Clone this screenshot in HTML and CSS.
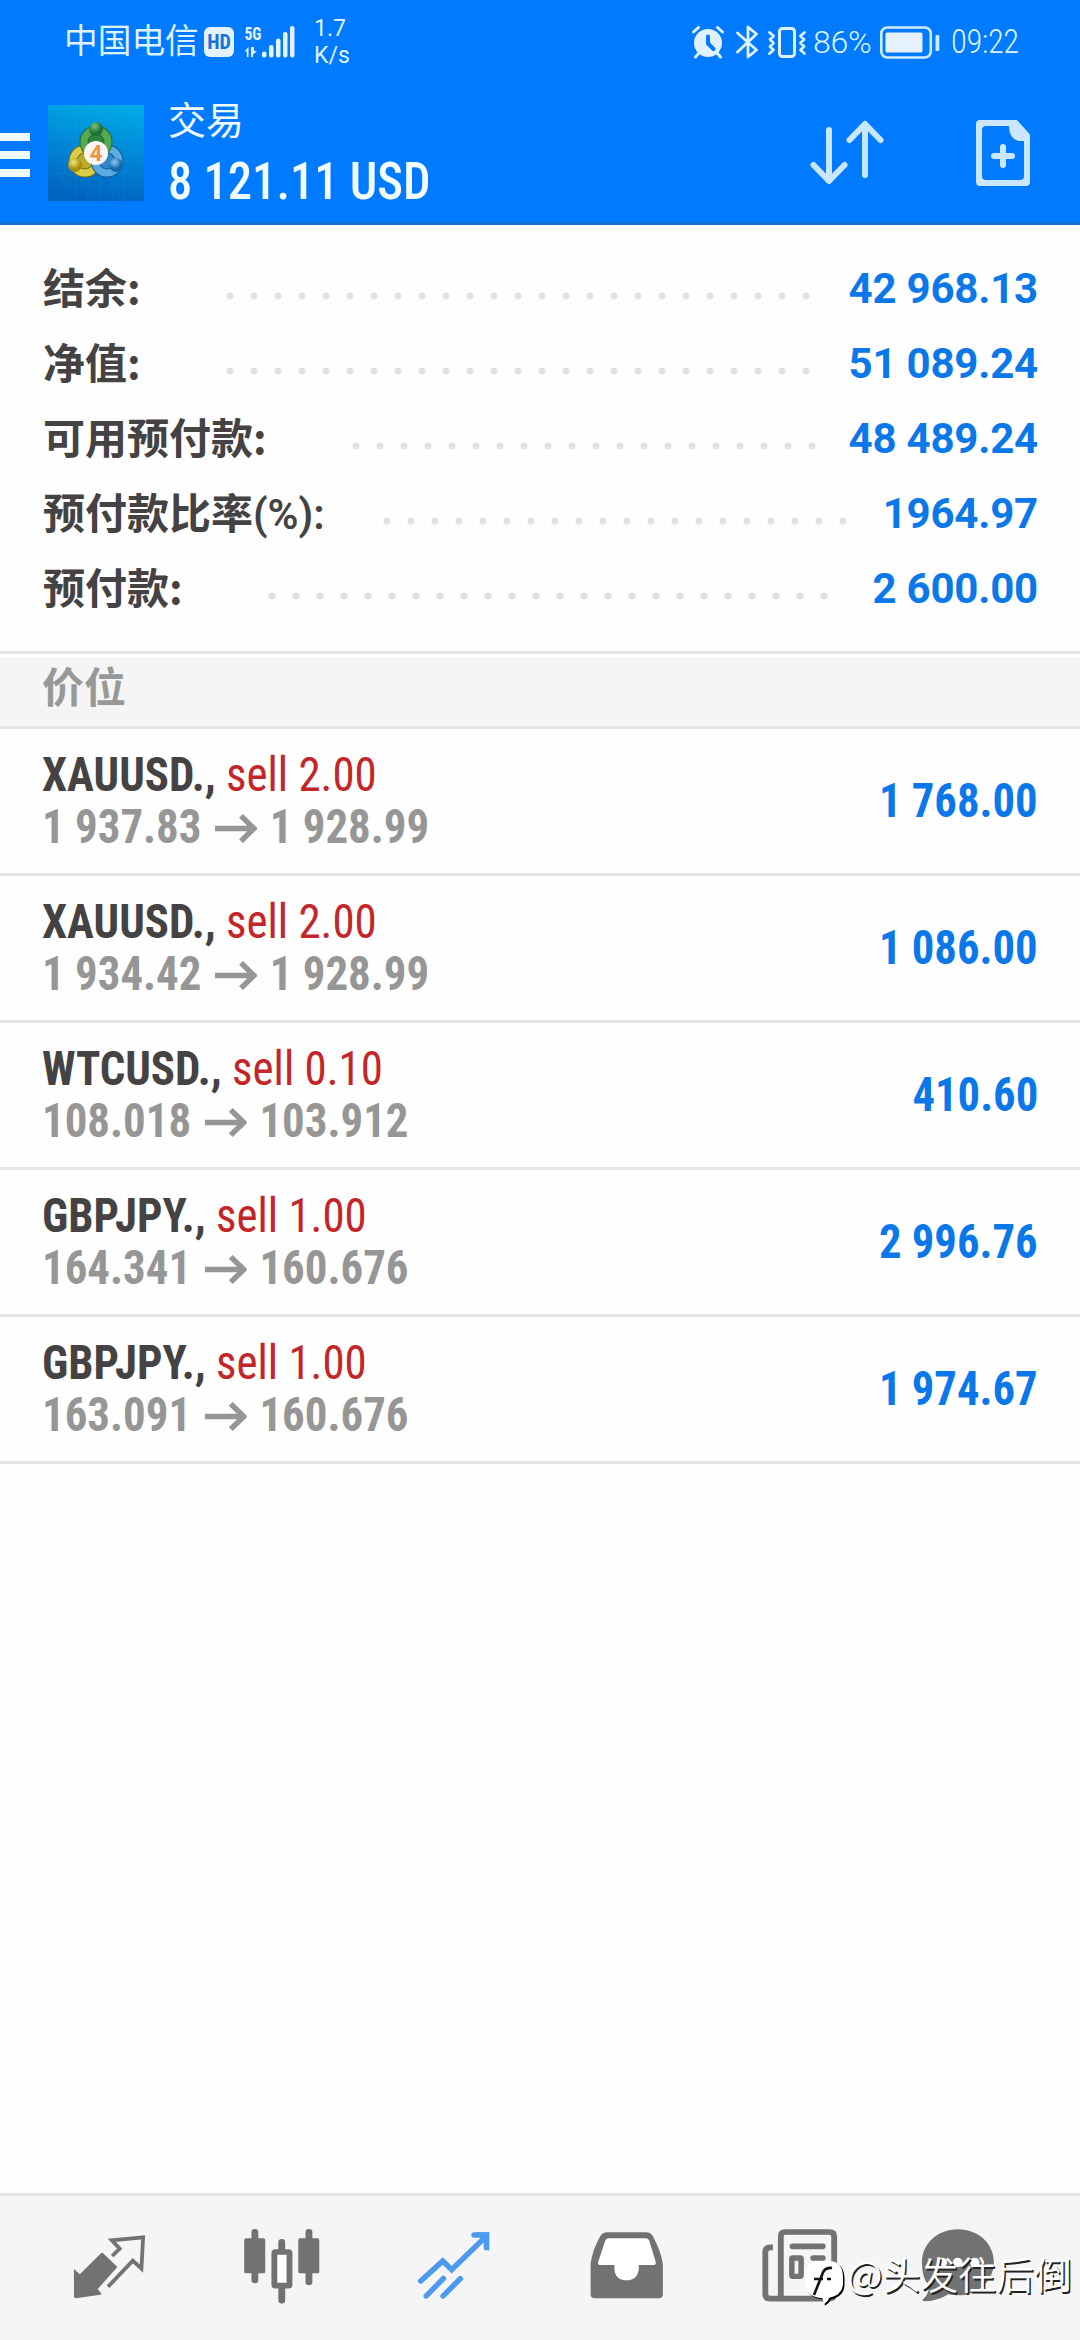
FILE: index.html
```html
<!DOCTYPE html>
<html lang="zh-CN">
<head>
<meta charset="utf-8">
<title>交易</title>
<link rel="stylesheet" href="styles.css">
</head>
<body>
<div class="screen">
  <header class="header">
    <div class="status">
      <span class="carrier">中国电信</span>
      <span class="hd">HD</span>
      <svg class="signal" width="54" height="38" viewBox="242 21 54 38" fill="#e4f3ff">
        <text class="net" x="244.500" y="38" textLength="17" lengthAdjust="spacingAndGlyphs">5G</text>
        <path d="M248.500 55V45l-4 4.500h2.300V55zM251 45v10h2v-2.500l4-3.500h-3v-4z"/>
        <rect x="262" y="49.500" width="4.500" height="6" rx="2"/><rect x="269" y="43" width="4.500" height="12.500" rx="2"/><rect x="276" y="36.500" width="4.500" height="19" rx="2"/><rect x="283" y="30" width="4.500" height="25.500" rx="2"/><rect x="290" y="24" width="4.500" height="31.500" rx="2"/>
      </svg>
      <span class="speed">1.7<br>K/s</span>
      <svg class="indicators" width="116" height="38" viewBox="691 21 116 38" fill="none" stroke="#e0f1ff" stroke-linecap="round" stroke-linejoin="round">
        <circle cx="708" cy="41" r="14" fill="#e0f1ff" stroke="none"/>
        <path d="M693.500 30l5-4.500M717.500 25.500l5 4.500M699 51l-3.500 4M717 51l3.500 4" stroke-width="3"/>
        <path d="M708 34.500v7l5.500 5.500" stroke="#007aff" stroke-width="4"/>
        <path d="M737.500 31l19 17-8.500 7V25l8.500 7-19 18" stroke-width="2.800"/>
        <rect x="779.500" y="26.500" width="15" height="28" rx="3" stroke-width="3"/>
        <path d="M769.500 30.500l4 3.500-3.500 3.500 3.500 3.500-3.500 3.500 3.500 3.500-4 3.500M804.500 30.500l-4 3.500 3.500 3.500-3.500 3.500 3.500 3.500-3.500 3.500 4 3.500" stroke-width="2.800"/>
      </svg>
      <span class="percent">86%</span>
      <svg class="battery" width="60" height="34" viewBox="880 23 60 34" fill="none">
        <rect x="881.300" y="25.500" width="49.500" height="30" rx="6" stroke="#d0eaff" stroke-width="2.600"/>
        <rect x="885.500" y="30.500" width="37" height="20" rx="1.500" fill="#e6f1ff"/>
        <rect x="935.500" y="33" width="3.800" height="16" rx="1" fill="#d0eaff"/>
      </svg>
      <span class="clock">09:22</span>
    </div>
    <div class="bar">
      <div class="burger"><i></i><i></i><i></i></div>
      <svg class="logo" width="96" height="96" viewBox="0 0 96 96">
        <defs>
          <linearGradient id="sky" x1=".6" y1="0" x2=".4" y2="1"><stop offset="0" stop-color="#00a8e8"/><stop offset=".5" stop-color="#0084d4"/><stop offset="1" stop-color="#0062be"/></linearGradient>
          <radialGradient id="green" cx=".4" cy=".3"><stop offset="0" stop-color="#7fc47c"/><stop offset="1" stop-color="#1d7238"/></radialGradient>
          <radialGradient id="gold" cx=".4" cy=".3"><stop offset="0" stop-color="#f4e878"/><stop offset="1" stop-color="#a98d12"/></radialGradient>
          <radialGradient id="blue" cx=".4" cy=".3"><stop offset="0" stop-color="#8ccdf4"/><stop offset="1" stop-color="#1267ae"/></radialGradient>
        </defs>
        <rect width="96" height="96" fill="url(#sky)"/>
        <path d="M16 0v96M28 0v96M40 0v96M52 0v96M64 0v96M76 0v96M0 20h96M0 32h96M0 44h96M0 56h96M0 68h96M0 80h96" stroke="#38c0e8" stroke-opacity=".12"/>
        <circle cx="37" cy="56" r="12" fill="#b8ab2c" stroke="#6d6c1d" stroke-width="9"/><circle cx="37" cy="56" r="12" fill="none" stroke="#dccc45" stroke-width="7"/>
        <circle cx="59" cy="56" r="12" fill="#2f86c8" stroke="#1b568d" stroke-width="9"/><circle cx="59" cy="56" r="12" fill="none" stroke="#58ace2" stroke-width="7"/>
        <circle cx="48" cy="37" r="12" fill="#30823d" stroke="#286b36" stroke-width="9"/><circle cx="48" cy="37" r="12" fill="none" stroke="#55aa54" stroke-width="7"/>
        <circle cx="48" cy="24" r="7" fill="url(#green)"/><circle cx="27" cy="60" r="7" fill="url(#gold)"/><circle cx="68" cy="60" r="7" fill="url(#blue)"/>
        <circle cx="48" cy="48" r="12" fill="#faf6f4"/>
        <text class="logo-digit" x="48" y="56" text-anchor="middle">4</text>
      </svg>
      <div class="heading"><div class="title">交易</div><div class="profit">8 121.11 USD</div></div>
      <svg class="sort" width="76" height="68" viewBox="808 119 76 68" fill="none" stroke="#c9e6ff" stroke-width="6" stroke-linecap="round" stroke-linejoin="round">
        <path d="M828 130v50M812.500 165l15.500 16 15.500-16M864 175v-50M848.500 140l15.500-16 15.500 16"/>
      </svg>
      <svg class="new" width="56" height="68" viewBox="974 119 56 68">
        <path fill-rule="evenodd" fill="#cbe6ff" d="M979 120h37l13 14.500V182q0 4-4 4h-46q-4 0-4-4v-58q0-4 4-4zM985 126q-4 0-4 4v46q0 4 4 4h34q4 0 4-4v-35h-5q-10-2-10-15z"/>
        <path d="M1002 147v18M993 156h18" stroke="#cbe6ff" stroke-width="6" stroke-linecap="round"/>
      </svg>
    </div>
  </header>

  <section class="summary">
    <div class="line"><span class="label short">结余:</span><span class="dots d25"></span><span class="sum">42 968.13</span></div>
    <div class="line"><span class="label short">净值:</span><span class="dots d25"></span><span class="sum">51 089.24</span></div>
    <div class="line"><span class="label free">可用预付款:</span><span class="dots d20"></span><span class="sum">48 489.24</span></div>
    <div class="line"><span class="label level">预付款比率<span class="latin">(%):</span></span><span class="dots d20"></span><span class="sum">1964.97</span></div>
    <div class="line"><span class="label margin">预付款:</span><span class="dots d24"></span><span class="sum">2 600.00</span></div>
  </section>

  <div class="section">价位</div>

  <main class="positions">
    <div class="position"><div class="info"><div class="name"><b>XAUUSD.,</b> sell 2.00</div><div class="prices">1 937.83<svg class="arrow" viewBox="0 0 42 30" preserveAspectRatio="none"><path d="M0 15h38M26 2l13 13-13 13"/></svg>1 928.99</div></div><div class="value">1 768.00</div></div>
    <div class="position"><div class="info"><div class="name"><b>XAUUSD.,</b> sell 2.00</div><div class="prices">1 934.42<svg class="arrow" viewBox="0 0 42 30" preserveAspectRatio="none"><path d="M0 15h38M26 2l13 13-13 13"/></svg>1 928.99</div></div><div class="value">1 086.00</div></div>
    <div class="position"><div class="info"><div class="name"><b>WTCUSD.,</b> sell 0.10</div><div class="prices">108.018<svg class="arrow" viewBox="0 0 42 30" preserveAspectRatio="none"><path d="M0 15h38M26 2l13 13-13 13"/></svg>103.912</div></div><div class="value">410.60</div></div>
    <div class="position"><div class="info"><div class="name"><b>GBPJPY.,</b> sell 1.00</div><div class="prices">164.341<svg class="arrow" viewBox="0 0 42 30" preserveAspectRatio="none"><path d="M0 15h38M26 2l13 13-13 13"/></svg>160.676</div></div><div class="value">2 996.76</div></div>
    <div class="position"><div class="info"><div class="name"><b>GBPJPY.,</b> sell 1.00</div><div class="prices">163.091<svg class="arrow" viewBox="0 0 42 30" preserveAspectRatio="none"><path d="M0 15h38M26 2l13 13-13 13"/></svg>160.676</div></div><div class="value">1 974.67</div></div>
  </main>

  <nav class="tabs">
    <svg class="tab" viewBox="190 140 260 240" preserveAspectRatio="none">
      <path fill="#737273" d="M300 218l40 40q2 3-1 6l-54 62 11 14q-1 3-4 3l-70 11q-6 0-6-6v-82l17 16 60-62q4-4 7-2z"/>
      <path fill="none" stroke="#737273" stroke-width="11" d="M327 227l22-22-23-25 91-9-5 94-25-24-72 78"/>
    </svg>
    <svg class="tab" viewBox="687 140 260 240" preserveAspectRatio="none">
      <path d="M739 156v143M896 156v149M817 186v30M817 320v40" stroke="#737273" stroke-width="20" stroke-linecap="round"/>
      <rect x="708" y="174" width="61" height="105" rx="5" fill="#737273"/><rect x="865" y="174" width="61" height="105" rx="5" fill="#737273"/>
      <rect x="795.500" y="215" width="44" height="101" rx="3" fill="#fff" stroke="#737273" stroke-width="17"/>
    </svg>
    <svg class="tab" viewBox="1187 140 260 240" preserveAspectRatio="none" fill="none" stroke="#4b9af0" stroke-width="16" stroke-linecap="round">
      <path d="M1221 302l64-60 26 26 96-96M1237 347l50-53M1286 347l50-52M1376 164h36v38"/>
      <path d="M1398 164h14v22z" fill="#4b9af0"/>
    </svg>
    <svg class="tab" viewBox="121 140 260 240" preserveAspectRatio="none">
      <path fill="#737273" d="M195 156h112q14 0 20 12 22 42 29 82v92q0 12-12 12H159q-13 0-13-12v-92q5-40 28-82 7-12 21-12z"/>
      <path fill="#fff" d="M198 174h108q7 0 10 6l19 64q2 10-7 10h-42v12q-4 34-36 34t-35-34v-12h-40q-9 0-7-10l21-64q3-6 9-6z"/>
    </svg>
    <svg class="tab" viewBox="625 140 260 240" preserveAspectRatio="none" fill="none" stroke="#737273" stroke-width="17">
      <path d="M677 201h-8q-14 0-14 14v126q0 14 14 14h170q16 0 16-14V168q0-13-13-13H713q-13 0-13 13v186"/>
      <path d="M734 198h88M794 233h28M794 262h28M794 290h28" stroke-linecap="round"/>
      <rect x="732" y="233" width="27" height="55" rx="3" stroke-width="16"/>
    </svg>
    <svg class="tab" viewBox="1083 140 260 240" preserveAspectRatio="none">
      <path fill="#737273" d="M1213 147c62 0 105 45 105 99s-43 99-105 99q-14 0-27-3-31 20-68 21-12-1-4-8 16-15 15-38c-14-19-20-40-20-71 0-54 44-99 104-99z"/>
      <g fill="#fff"><circle cx="1168" cy="246" r="14"/><circle cx="1213" cy="246" r="14"/><circle cx="1262" cy="246" r="14"/></g>
    </svg>
  </nav>

  <div class="watermark">
    <svg width="44" height="48" viewBox="802 2258 44 48">
      <path transform="translate(1.500 1.500)" fill="#000" d="M818 2261h10q14 0 14 17v5q0 12-14 15-1 4-6 6 1-4-1-6-17-1-17-17 0-20 14-20z"/>
      <path fill="#fff" d="M818 2261h10q14 0 14 17v5q0 12-14 15-1 4-6 6 1-4-1-6-17-1-17-17 0-20 14-20z"/>
      <path fill="none" stroke="#111" stroke-width="2.600" d="M831 2268q-8-1-10 7l-8 20M813 2279h9M826 2279h4"/>
    </svg>
    <span>@头发往后倒</span>
  </div>
</div>
</body>
</html>
```
FILE: styles.css
```css
* { box-sizing: border-box; }
body {
  margin: 0;
  background: #fefefe;
  color: #444243;
  font-family: Roboto, "Noto Sans CJK SC", sans-serif;
}
svg { display: block; flex: none; }
.screen {
  position: relative;
  display: flex;
  flex-direction: column;
  width: 1080px;
  height: 2340px;
  overflow: hidden;
}

/* header */
.header {
  height: 225px;
  background: #007aff;
  border-bottom: 3px solid #1470cf;
  color: #f2fbff;
}
.status {
  display: flex;
  align-items: center;
  height: 83px;
  padding-left: 64px;
  color: #dff2ff;
  white-space: nowrap;
}
.carrier { width: 140px; font-size: 33.700px; line-height: 40px; }
.hd {
  width: 30px;
  height: 30px;
  border-radius: 6px;
  background: #e4f1ff;
  color: #1673dc;
  font-size: 20px;
  font-weight: 700;
  font-stretch: 80%;
  line-height: 31px;
  text-align: center;
}
.signal { margin-left: 8px; }
.net { font-size: 19px; font-weight: 700; font-stretch: 75%; }
.speed { width: 54px; margin-left: 18px; font-size: 23px; line-height: 27px; }
.indicators { margin-left: 323px; }
.percent { width: 66px; margin-left: 6px; font-size: 32px; font-weight: 300; letter-spacing: -.3px; }
.battery { margin-left: 1px; }
.clock { margin-left: 11px; font-size: 32.500px; font-weight: 300; font-stretch: 85%; letter-spacing: -.4px; }

.bar { display: flex; align-items: flex-start; padding-top: 15px; }
.burger { display: flex; flex-direction: column; gap: 10px; width: 30px; padding-top: 35px; }
.burger i { height: 8px; background: #f0faff; }
.logo { margin: 7px 0 0 18px; }
.logo-digit { fill: #ef9242; font-size: 22px; font-weight: 700; }
.heading { width: 640px; padding-left: 24px; }
.title { font-size: 38px; line-height: 46px; }
.profit {
  width: max-content;
  margin-top: 7px;
  font-size: 52px;
  font-weight: 470;
  font-stretch: 75%;
  line-height: 62px;
  transform: scaleX(.935);
  transform-origin: left;
}
.sort { margin: 21px 0 0 25px; }
.new { margin: 21px 0 0 90px; }

/* account summary */
.summary { padding: 26px 43px 25px; border-bottom: 3px solid #e6e4e5; }
.line { display: flex; align-items: center; height: 75px; font-size: 42px; line-height: 75px; white-space: nowrap; }
.label { margin-bottom: 6px; font-family: "Noto Sans CJK SC", sans-serif; font-weight: 700; }
.latin { font-family: Roboto, sans-serif; font-weight: 600; line-height: 0; }
.short { width: 175px; }
.free { width: 301px; }
.level { width: 332px; }
.margin { width: 217px; }
.dots {
  height: 24px;
  margin-top: 15px;
  background: radial-gradient(circle at 12px 12px, #dfe2e2 3px, transparent 4px) 0 0 / 24px 24px;
}
.d20 { width: 480px; }
.d24 { width: 576px; }
.d25 { width: 600px; }
.sum { margin: 0 -1px 0 auto; color: #0b78ea; font-weight: 700; letter-spacing: -.2px; }

.section {
  height: 75px;
  padding-left: 42px;
  border-top: 3px solid #fefefe;
  border-bottom: 3px solid #e4e4e4;
  background: #f6f5f6;
  color: #979998;
  font-size: 42px;
  font-weight: 700;
  line-height: 63px;
}

/* open positions */
.position {
  display: flex;
  align-items: center;
  justify-content: space-between;
  height: 147px;
  padding: 0 42px;
  border-bottom: 3px solid #e4e4e4;
  font-size: 48px;
  font-stretch: 75%;
  line-height: 52px;
  white-space: nowrap;
}
.info { transform: scaleX(.935); transform-origin: left; }
.name { color: #c42528; font-weight: 440; }
.name b { color: #444243; font-weight: 700; }
.prices { display: flex; align-items: center; color: #969696; font-weight: 700; }
.arrow { width: 45px; height: 29px; margin: 3px 14px 0; fill: none; stroke: #969696; stroke-width: 5.500; }
.value { color: #0b78ea; font-weight: 700; transform: scaleX(.93); transform-origin: right; }

/* bottom navigation */
.tabs {
  display: grid;
  grid-template-columns: 172px 172px 172px 174px 172px 144px;
  justify-items: center;
  height: 147px;
  margin-top: auto;
  padding: 31px 50px 0 24px;
  border-top: 3px solid #e3e2e3;
  background: #f6f5f6;
}
.tab { width: 89.500px; height: 80px; }

.watermark {
  position: absolute;
  top: 2249px;
  left: 803px;
  display: flex;
  align-items: flex-start;
  color: #fff;
  font-family: "Noto Sans CJK SC", sans-serif;
  font-size: 37.900px;
  font-weight: 350;
  line-height: 48px;
  text-shadow: 1.500px 1.500px 0 #222;
  white-space: nowrap;
}
.watermark svg { margin-top: 9px; }
```
